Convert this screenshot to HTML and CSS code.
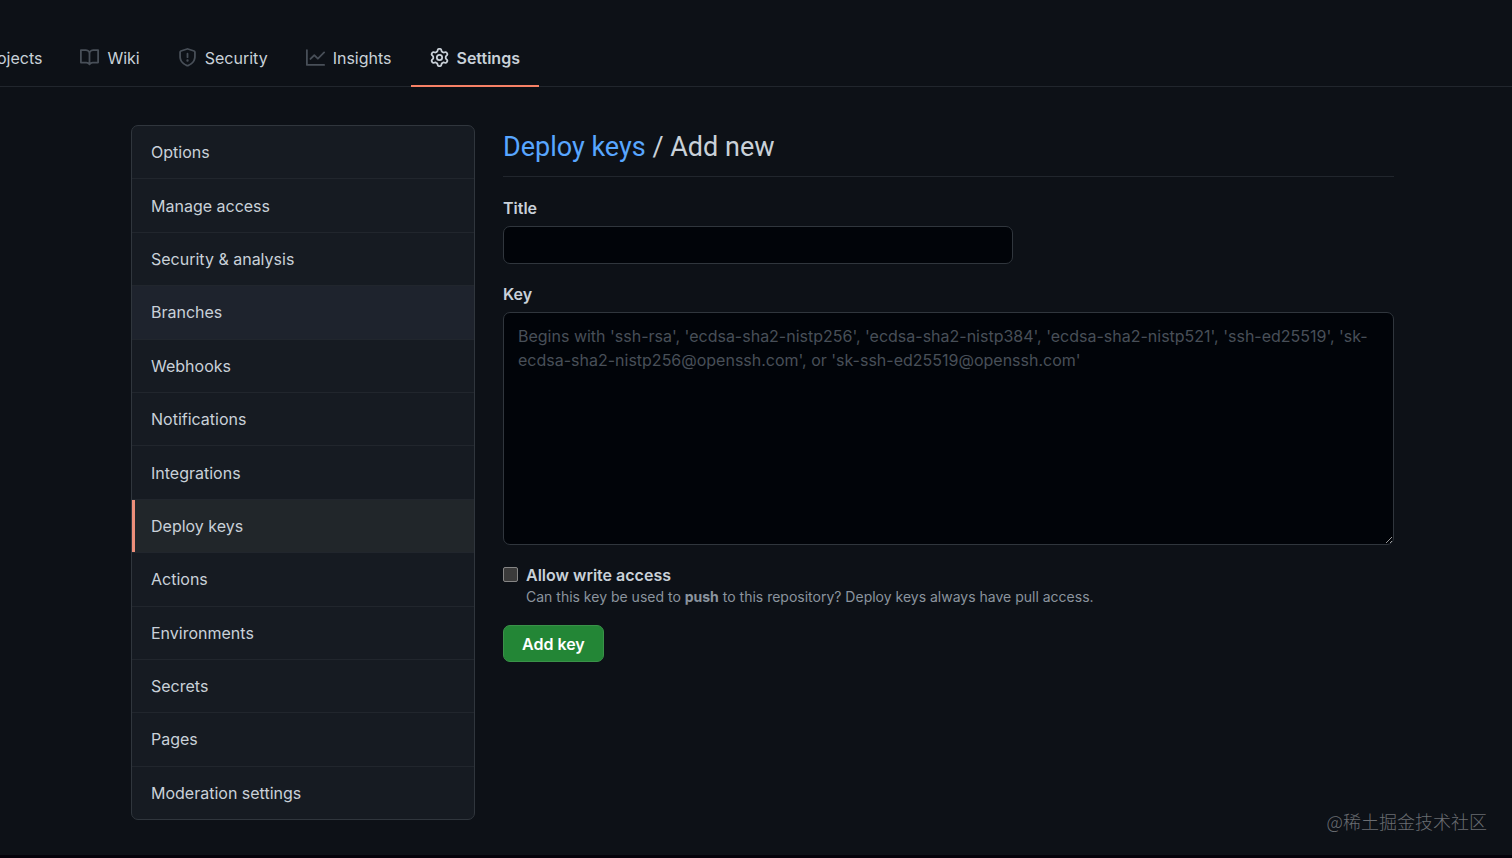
FILE: index.html
```html
<!DOCTYPE html>
<html lang="en">
<head>
    <meta charset="UTF-8">
    <meta name="viewport" content="width=device-width, initial-scale=1.0">
    <title>Deploy keys</title>
    <link rel="stylesheet" href="styles.css">
</head>
<body>
    <header class="repo-header">
        <nav class="tabs">
            <a href="#" class="tab">Projects</a>
            <a href="#" class="tab">
                <svg class="icon" viewBox="0 0 16 16"><path fill-rule="evenodd" d="M0 1.75A.75.75 0 01.75 1h4.253c1.227 0 2.317.59 3 1.501A3.744 3.744 0 0111.006 1h4.245a.75.75 0 01.75.75v10.5a.75.75 0 01-.75.75h-4.507a2.25 2.25 0 00-1.591.659l-.622.621a.75.75 0 01-1.06 0l-.622-.621A2.25 2.25 0 005.258 13H.75a.75.75 0 01-.75-.75V1.75zm8.755 3a2.25 2.25 0 012.25-2.25H14.5v9h-3.757c-.71 0-1.4.201-1.992.572l.004-7.322zm-1.504 7.324l.004-5.073-.002-2.253A2.25 2.25 0 005.003 2.5H1.5v9h3.757a3.75 3.75 0 011.994.574z"/></svg>
                Wiki
            </a>
            <a href="#" class="tab">
                <svg class="icon" viewBox="0 0 16 16"><path fill-rule="evenodd" d="M7.467.133a1.75 1.75 0 011.066 0l5.25 1.68A1.75 1.75 0 0115 3.48V7c0 1.566-.32 3.182-1.303 4.682-.983 1.498-2.585 2.813-5.032 3.855a1.7 1.7 0 01-1.33 0c-2.447-1.042-4.049-2.357-5.032-3.855C1.32 10.182 1 8.566 1 7V3.48a1.75 1.75 0 011.217-1.667l5.25-1.68zm.61 1.429a.25.25 0 00-.153 0l-5.25 1.68a.25.25 0 00-.174.238V7c0 1.358.275 2.666 1.057 3.86.784 1.194 2.121 2.34 4.366 3.297a.2.2 0 00.154 0c2.245-.956 3.582-2.104 4.366-3.298C13.225 9.666 13.5 8.36 13.5 7V3.48a.25.25 0 00-.174-.237l-5.25-1.68zM9 10.5a1 1 0 11-2 0 1 1 0 012 0zm-.25-5.75a.75.75 0 10-1.5 0v3a.75.75 0 001.5 0v-3z"/></svg>
                Security
            </a>
            <a href="#" class="tab">
                <svg class="icon" viewBox="0 0 16 16"><path fill-rule="evenodd" d="M1.5 1.75a.75.75 0 00-1.5 0v12.5c0 .414.336.75.75.75h14.5a.75.75 0 000-1.5H1.5V1.75zm14.28 2.53a.75.75 0 00-1.06-1.06L10 7.94 7.53 5.47a.75.75 0 00-1.06 0L3.22 8.72a.75.75 0 001.06 1.06L7 7.06l2.47 2.47a.75.75 0 001.06 0l5.25-5.25z"/></svg>
                Insights
            </a>
            <a href="#" class="tab selected" aria-current="page">
                <svg class="icon" viewBox="0 0 16 16"><path fill-rule="evenodd" d="M7.429 1.525a6.593 6.593 0 011.142 0c.036.003.108.036.137.146l.289 1.105c.147.56.55.967.997 1.189.174.086.341.183.501.29.417.278.97.423 1.53.27l1.102-.303c.11-.03.175.016.195.046.219.31.41.641.573.989.014.031.022.11-.059.19l-.815.806c-.411.406-.562.957-.53 1.456a4.588 4.588 0 010 .582c-.032.499.119 1.05.53 1.456l.815.806c.08.08.073.159.059.19a6.494 6.494 0 01-.573.99c-.02.029-.086.074-.195.045l-1.103-.303c-.559-.153-1.112-.008-1.529.27-.16.107-.327.204-.5.29-.449.222-.851.628-.998 1.189l-.289 1.105c-.029.11-.101.143-.137.146a6.613 6.613 0 01-1.142 0c-.036-.003-.108-.037-.137-.146l-.289-1.105c-.147-.56-.55-.967-.997-1.189a4.502 4.502 0 01-.501-.29c-.417-.278-.97-.423-1.53-.27l-1.102.303c-.11.03-.175-.016-.195-.046a6.492 6.492 0 01-.573-.989c-.014-.031-.022-.11.059-.19l.815-.806c.411-.406.562-.957.53-1.456a4.587 4.587 0 010-.582c.032-.499-.119-1.05-.53-1.456l-.815-.806c-.08-.08-.073-.159-.059-.19a6.44 6.44 0 01.573-.99c.02-.029.086-.075.195-.045l1.103.303c.559.153 1.112.008 1.529-.27.16-.107.327-.204.5-.29.449-.222.851-.628.998-1.189l.289-1.105c.029-.11.101-.143.137-.146zM8 0c-.236 0-.47.01-.701.03-.743.065-1.29.615-1.458 1.261l-.29 1.106c-.017.066-.078.158-.211.224a5.994 5.994 0 00-.668.386c-.123.082-.233.09-.3.071L3.27 2.776c-.644-.177-1.392.02-1.82.63a7.977 7.977 0 00-.704 1.217c-.315.675-.111 1.422.363 1.891l.815.806c.05.048.098.147.088.294a6.084 6.084 0 000 .772c.01.147-.038.246-.088.294l-.815.806c-.474.469-.678 1.216-.363 1.891.2.428.436.835.704 1.218.428.609 1.176.806 1.82.63l1.103-.303c.066-.019.176-.011.299.071.213.143.436.272.668.386.133.066.194.158.212.224l.289 1.106c.169.646.715 1.196 1.458 1.26a8.094 8.094 0 001.402 0c.743-.064 1.29-.614 1.458-1.26l.29-1.106c.017-.066.078-.158.211-.224a5.98 5.98 0 00.668-.386c.123-.082.233-.09.3-.071l1.102.302c.644.177 1.392-.02 1.82-.63.268-.382.505-.789.704-1.217.315-.675.111-1.422-.364-1.891l-.814-.806c-.05-.048-.098-.147-.088-.294a6.1 6.1 0 000-.772c-.01-.147.039-.246.088-.294l.814-.806c.475-.469.679-1.216.364-1.891a7.992 7.992 0 00-.704-1.218c-.428-.609-1.176-.806-1.82-.63l-1.103.303c-.066.019-.176.011-.299-.071a5.991 5.991 0 00-.668-.386c-.133-.066-.194-.158-.212-.224L10.16 1.29C9.99.645 9.444.095 8.701.031A8.094 8.094 0 008 0zm1.5 8a1.5 1.5 0 11-3 0 1.5 1.5 0 013 0zM11 8a3 3 0 11-6 0 3 3 0 016 0z"/></svg>
                Settings
            </a>
        </nav>
    </header>

    <main class="layout">
        <nav class="menu">
            <a href="#" class="menu-item">Options</a>
            <a href="#" class="menu-item">Manage access</a>
            <a href="#" class="menu-item">Security &amp; analysis</a>
            <a href="#" class="menu-item hovered">Branches</a>
            <a href="#" class="menu-item">Webhooks</a>
            <a href="#" class="menu-item">Notifications</a>
            <a href="#" class="menu-item">Integrations</a>
            <a href="#" class="menu-item current" aria-current="page">Deploy keys</a>
            <a href="#" class="menu-item">Actions</a>
            <a href="#" class="menu-item">Environments</a>
            <a href="#" class="menu-item">Secrets</a>
            <a href="#" class="menu-item">Pages</a>
            <a href="#" class="menu-item">Moderation settings</a>
        </nav>

        <section class="content">
            <h1 class="heading"><a href="#">Deploy keys</a> / Add new</h1>
            <form class="key-form">
                <label class="field-label" for="title">Title</label>
                <input class="field title-input" type="text" id="title">

                <label class="field-label" for="key">Key</label>
                <textarea class="field key-input" id="key" placeholder="Begins with 'ssh-rsa', 'ecdsa-sha2-nistp256', 'ecdsa-sha2-nistp384', 'ecdsa-sha2-nistp521', 'ssh-ed25519', 'sk-ecdsa-sha2-nistp256@openssh.com', or 'sk-ssh-ed25519@openssh.com'"></textarea>

                <div class="write-access">
                    <input class="checkbox" type="checkbox" id="write" aria-describedby="write-note">
                    <div>
                        <label class="write-label" for="write">Allow write access</label>
                        <p class="note" id="write-note">Can this key be used to <strong>push</strong> to this repository? Deploy keys always have pull access.</p>
                    </div>
                </div>

                <button class="btn" type="button">Add key</button>
            </form>
        </section>
    </main>

    <div class="watermark" lang="zh">@稀土掘金技术社区</div>
</body>
</html>
```
FILE: styles.css
```css
* {
    margin: 0;
    padding: 0;
    box-sizing: border-box;
}

body {
    display: flex;
    flex-direction: column;
    min-height: 100vh;
    background-color: #0d1117;
    border-bottom: 3px solid #04020a;
    color: #c9d1d9;
    font-family: Inter, "Noto Sans CJK SC", sans-serif;
    font-size: 16px;
    line-height: 24px;
    overflow-x: hidden;
}

a {
    color: inherit;
    text-decoration: none;
}

.repo-header {
    padding-top: 30px;
    border-bottom: 1px solid #21262d;
}

.tabs {
    display: flex;
    margin: 0 0 -1px -38px;
}

.tab {
    display: flex;
    align-items: center;
    gap: 8px;
    height: 57px;
    padding: 0 19px;
    border-bottom: 2px solid transparent;
    white-space: nowrap;
}

.icon {
    width: 19px;
    height: 19px;
    fill: #484f58;
}

.tab.selected {
    border-color: #f78166;
    font-weight: 600;
}

.tab.selected .icon {
    fill: #c9d1d9;
}

.layout {
    display: flex;
    flex: 1;
    gap: 28px;
    width: 100%;
    padding: 38px 118px 35px 131px;
}

.menu {
    display: flex;
    flex-direction: column;
    flex: none;
    width: 344px;
    background-color: #161b22;
    border: 1px solid #30363d;
    border-radius: 7px;
    overflow: hidden;
}

.menu-item {
    display: flex;
    align-items: center;
    flex: 1;
    padding: 0 19px;
    border-bottom: 1px solid #21262d;
}

.menu-item:last-child {
    border-bottom: none;
}

.menu-item.hovered {
    background-color: #1e232d;
}

.menu-item.current {
    background-color: #21262a;
    box-shadow: inset 3px 0 #ec8e7a;
}

.content {
    flex: 1;
}

.heading {
    padding: 4px 0 11px;
    margin-bottom: 19px;
    border-bottom: 1px solid #21262d;
    font-family: Roboto, sans-serif;
    font-size: 27px;
    font-weight: 400;
    line-height: 36px;
}

.heading a {
    color: #58a6ff;
}

.field-label {
    display: block;
    margin-bottom: 6px;
    font-weight: 600;
}

.field {
    display: block;
    background-color: #010409;
    border: 1px solid #30363d;
    border-radius: 7px;
    color: inherit;
    font: inherit;
}

.title-input {
    width: 510px;
    max-width: 100%;
    height: 38px;
    margin-bottom: 18px;
    padding: 0 14px;
}

.key-input {
    width: 100%;
    height: 233px;
    margin-bottom: 18px;
    padding: 11px 14px;
    color-scheme: dark;
    resize: vertical;
}

.key-input::placeholder {
    color: #484f58;
}

.write-access {
    display: flex;
    gap: 8px;
    margin-bottom: 18px;
}

.checkbox {
    appearance: none;
    width: 15px;
    height: 15px;
    margin-top: 4px;
    background-color: #3b3b3b;
    border: 1px solid #858585;
    border-radius: 2px;
}

.write-label {
    display: block;
    font-weight: 600;
}

.note {
    color: #8b949e;
    font-size: 14px;
    line-height: 20px;
}

.btn {
    height: 37px;
    padding: 0 18px;
    background-color: #238636;
    border: 1px solid #3a9249;
    border-radius: 7px;
    color: #fff;
    font: inherit;
    font-weight: 600;
}

.watermark {
    position: absolute;
    right: 25px;
    bottom: 24px;
    color: #6a6d72;
    font-family: "Noto Sans CJK SC", sans-serif;
    font-size: 18px;
    font-weight: 300;
    line-height: 26px;
}
```
